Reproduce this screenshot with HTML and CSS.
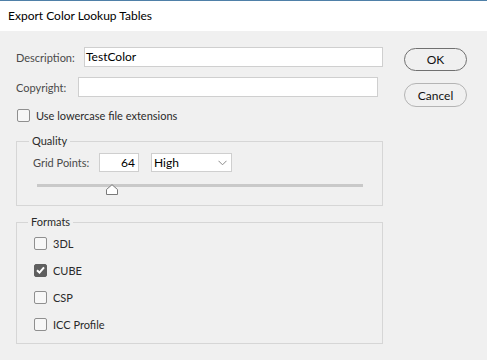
FILE: index.html
```html
<!DOCTYPE html>
<html>
<head>
<meta charset="utf-8">
<link rel="stylesheet" href="styles.css">
</head>
<body>
<div class="titlebar">Export Color Lookup Tables</div>
<div class="dialog">
  <div class="form">
    <div class="row">
      <span class="lbl lbl-desc">Description:</span>
      <div class="field">TestColor</div>
    </div>
    <div class="row row-copy">
      <span class="lbl lbl-copy">Copyright:</span>
      <div class="field"></div>
    </div>
    <div class="check-row lower"><span class="box"></span><span class="ctext">Use lowercase file extensions</span></div>

    <fieldset class="group quality">
      <legend>Quality</legend>
      <div class="grid-row">
        <span class="lbl lbl-grid">Grid Points:</span>
        <div class="num">64</div>
        <div class="select"><span>High</span>
          <svg class="chev" width="9" height="6" viewBox="0 0 9 6"><path d="M0.5 0.8 L4.5 4.8 L8.5 0.8" fill="none" stroke="#8a8a8a" stroke-width="1"/></svg>
        </div>
      </div>
      <div class="slider">
        <div class="track"></div>
        <svg class="thumb" width="12" height="11" viewBox="0 0 12 11"><path d="M0.5 10.5 L0.5 5.5 L6 0.7 L11.5 5.5 L11.5 10.5 Z" fill="#ffffff" stroke="#7a7a7a" stroke-width="1"/></svg>
      </div>
    </fieldset>

    <fieldset class="group formats">
      <legend>Formats</legend>
      <div class="check-row fmt"><span class="box"></span><span class="ctext">3DL</span></div>
      <div class="check-row fmt"><span class="box checked"><svg width="9" height="8" viewBox="0 0 9 8"><path d="M1 4.2 L3.5 6.6 L8 1.4" fill="none" stroke="#ffffff" stroke-width="2"/></svg></span><span class="ctext">CUBE</span></div>
      <div class="check-row fmt"><span class="box"></span><span class="ctext">CSP</span></div>
      <div class="check-row fmt"><span class="box"></span><span class="ctext">ICC Profile</span></div>
    </fieldset>
  </div>
  <div class="buttons">
    <button class="btn btn-ok">OK</button>
    <button class="btn btn-cancel">Cancel</button>
  </div>
</div>
</body>
</html>
```

FILE: styles.css
```css
* { box-sizing: border-box; }
html, body {
  margin: 0;
  padding: 0;
  background: #f0f0f0;
  width: 487px;
  height: 360px;
  overflow: hidden;
  font-family: Lato, "Liberation Sans", sans-serif;
  font-size: 11px;
  color: #1e1e1e;
}
.titlebar {
  height: 31px;
  background: #ffffff;
  border-top: 1px solid #4f80a8;
  padding-left: 8px;
  line-height: 30px;
  font-size: 12px;
  color: #000;
}
.dialog {
  display: flex;
  padding: 16px 0 0 16px;
}
.form {
  width: 367px;
  display: flex;
  flex-direction: column;
}
.row {
  display: flex;
  align-items: center;
  height: 20px;
  margin-bottom: 10px;
}
.row-copy { margin-right: 5px; }
.lbl { color: #4a4a4a; }
.lbl-desc { width: 68px; }
.lbl-copy { width: 62px; }
.field {
  flex: 1;
  height: 20px;
  background: #fff;
  border: 1px solid #cfcfcf;
  padding-left: 1px;
  line-height: 18px;
  color: #000;
  font-size: 12px;
}
.check-row {
  display: flex;
  align-items: center;
  height: 16px;
}
.lower { padding-left: 1px; margin-bottom: 10px; }
.box {
  width: 13px;
  height: 13px;
  border: 1px solid #8f8f8f;
  border-radius: 2px;
  background: #f7f7f7;
  display: flex;
  align-items: center;
  justify-content: center;
  flex: none;
}
.box.checked {
  background: #5f5f5f;
  border-color: #5f5f5f;
}
.ctext { margin-left: 6px; color: #2a2a2a; }
.group {
  margin: 0;
  border: 1px solid #d6d6d6;
  min-width: 0;
}
.group legend {
  padding: 0 3px;
  line-height: 16px;
  color: #2a2a2a;
}
.quality {
  padding: 4px 19px 10px 16px;
}
.quality legend { margin-left: -4px; }
.grid-row {
  display: flex;
  align-items: center;
  height: 19px;
}
.lbl-grid { width: 66px; }
.num {
  width: 40px;
  height: 19px;
  background: #fff;
  border: 1px solid #cfcfcf;
  text-align: right;
  padding-right: 3px;
  line-height: 17px;
  color: #000;
  font-size: 12px;
}
.select {
  margin-left: 12px;
  width: 81px;
  height: 19px;
  background: #fff;
  border: 1px solid #cfcfcf;
  display: flex;
  align-items: center;
  justify-content: space-between;
  padding: 0 4px 0 2px;
  color: #000;
  font-size: 12px;
}
.chev { margin-top: 1px; }
.slider {
  position: relative;
  margin: 12px 0 0 4px;
  height: 11px;
  width: 326px;
}
.track {
  margin-top: 4px;
  height: 3px;
  background: #c9c9c9;
}
.thumb {
  position: absolute;
  left: 69px;
  top: 0;
}
.formats {
  margin-top: 8px;
  padding: 3px 10px 9px 17px;
}
.formats legend { margin-left: -6px; }
.fmt {
  height: 20px;
  margin-bottom: 7px;
}
.fmt:last-child { margin-bottom: 0; }
.buttons {
  margin-left: 21px;
  display: flex;
  flex-direction: column;
  padding-top: 1px;
}
.btn {
  width: 63px;
  font-family: inherit;
  font-size: 12px;
  color: #111;
  background: #f0f0f0;
  border-radius: 12px;
  padding: 0;
}
.btn-ok {
  height: 23px;
  border: 1px solid #707070;
}
.btn-cancel {
  margin-top: 12px;
  height: 24px;
  border: 1px solid #b4b4b4;
}
```
